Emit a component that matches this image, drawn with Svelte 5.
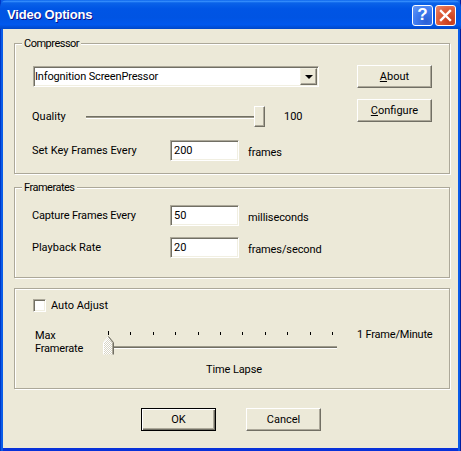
<script>
  const ticks = Array.from({ length: 11 }, (_, i) => i);
</script>

<div class="window">
  <header class="titlebar">
    <span class="title">Video Options</span>
    <div class="caption-buttons">
      <div class="cap help">?</div>
      <div class="cap close">
        <svg width="13" height="13" viewBox="0 0 13 13"><path d="M2 2 L11 11 M11 2 L2 11" stroke="#fff" stroke-width="2.4" stroke-linecap="square" fill="none"/></svg>
      </div>
    </div>
  </header>

  <main class="client">
    <section class="group g1">
      <span class="legend">Compressor</span>
      <div class="col-main">
        <div class="combo">
          <span class="combo-text">Infognition ScreenPressor</span>
          <span class="combo-btn"><svg width="8" height="4" viewBox="0 0 8 4"><path d="M0 0H8L4 4Z" fill="#000"/></svg></span>
        </div>
        <div class="quality">
          <span class="q-label">Quality</span>
          <div class="hslider">
            <div class="track"></div>
            <div class="thumb-rect"></div>
          </div>
          <span class="q-value">100</span>
        </div>
        <div class="row keyrow">
          <span class="lbl">Set Key Frames Every</span>
          <div class="input">200</div>
          <span class="unit">frames</span>
        </div>
      </div>
      <div class="col-side">
        <div class="btn"><span><u>A</u>bout</span></div>
        <div class="btn"><span><u>C</u>onfigure</span></div>
      </div>
    </section>

    <section class="group g2">
      <span class="legend">Framerates</span>
      <div class="row">
        <span class="lbl tight">Capture Frames Every</span>
        <div class="input">50</div>
        <span class="unit">milliseconds</span>
      </div>
      <div class="row second">
        <span class="lbl">Playback Rate</span>
        <div class="input">20</div>
        <span class="unit">frames/second</span>
      </div>
    </section>

    <section class="group g3">
      <label class="check">
        <span class="box"></span>
        <span>Auto Adjust</span>
      </label>
      <div class="rate">
        <span class="max">Max<br />Framerate</span>
        <div class="rate-mid">
          <div class="ticks">
            {#each ticks as t}
              <i class:first={t === 0}></i>
            {/each}
          </div>
          <div class="rate-track"></div>
          <svg class="thumb-penta" width="11" height="19" viewBox="0 0 11 19">
            <defs>
              <pattern id="dots" width="2" height="2" patternUnits="userSpaceOnUse">
                <rect width="2" height="2" fill="#fff"/>
                <rect width="1" height="1" fill="#d8d5c6"/>
                <rect x="1" y="1" width="1" height="1" fill="#d8d5c6"/>
              </pattern>
            </defs>
            <path d="M0.5 18.5V6.5L5.5 0.5L10.5 6.5V18.5Z" fill="url(#dots)"/>
            <path d="M0.5 18.5V6.5L5.5 0.5" fill="none" stroke="#fff"/>
            <path d="M5.5 0.5L9.5 6.5V18.5" fill="none" stroke="#aca899"/>
            <path d="M5.5 0.5L10.5 6.5V18.5" fill="none" stroke="#716f64"/>
          </svg>
        </div>
        <span class="minute">1 Frame/Minute</span>
      </div>
      <div class="lapse">Time Lapse</div>
    </section>

    <footer class="actions">
      <div class="btn default"><span>OK</span></div>
      <div class="btn"><span>Cancel</span></div>
    </footer>
  </main>
</div>

<style>
  :global(body) {
    margin: 0;
    background: #ece9d8;
  }
  .window {
    width: 461px;
    height: 451px;
    display: flex;
    flex-direction: column;
    font-family: Roboto, "Liberation Sans", Arial, sans-serif;
    font-size: 11px;
    color: #000;
    background:
      linear-gradient(90deg, #0038c8 0, #0038c8 1px, #0a5ce8 1px, #0a5ce8 460px, #001ea0 460px);
    overflow: hidden;
  }
  .titlebar {
    height: 29px;
    flex: none;
    display: flex;
    align-items: center;
    justify-content: space-between;
    padding: 0 5px 0 7px;
    box-sizing: border-box;
    background: linear-gradient(180deg, #0058e6 0, #3a93ff 4%, #0a62e8 10%, #0055e5 30%, #0054e3 60%, #0058ee 85%, #0047c8 100%);
    border-radius: 7px 7px 0 0;
  }
  .title {
    font-family: "Liberation Sans", Arial, sans-serif;
    font-size: 13px;
    letter-spacing: -0.2px;
    font-weight: bold;
    color: #fff;
    text-shadow: 1px 1px 0 #0f1089;
  }
  .caption-buttons {
    display: flex;
    gap: 2px;
    margin-top: 1px;
  }
  .cap {
    width: 21px;
    height: 21px;
    box-sizing: border-box;
    border: 1px solid #fff;
    border-radius: 3px;
    display: flex;
    align-items: center;
    justify-content: center;
  }
  .help {
    background: radial-gradient(circle at 70% 80%, #2a5fd6, #3f7cf0 55%, #6a9af5 100%);
    color: #fff;
    font-family: "Liberation Sans", Arial, sans-serif;
    font-size: 17px;
    font-weight: bold;
  }
  .close {
    background: radial-gradient(circle at 75% 80%, #c5391a, #e0603c 60%, #eb8a6e 100%);
  }
  .client {
    flex: 1;
    min-height: 0;
    margin: 0 3px;
    background: #ece9d8;
    padding: 14px 0 0 11px;
    display: flex;
    flex-direction: column;
    border-bottom: 3px solid #0831d9;
  }
  .group {
    position: relative;
    width: 436px;
    box-sizing: border-box;
    border: 1px solid #aca899;
    box-shadow: 1px 1px 0 #fff, inset 1px 1px 0 #fff;
  }
  .legend {
    position: absolute;
    top: -7px;
    left: 7px;
    padding: 0 2px;
    background: #ece9d8;
    line-height: 14px;
    letter-spacing: -0.5px;
  }
  .g1 {
    height: 131px;
    display: flex;
    padding: 22px 0 0 17px;
  }
  .col-main {
    width: 286px;
  }
  .combo {
    margin-left: 1px;
    height: 21px;
    box-sizing: border-box;
    background: #fff;
    border: 1px solid;
    border-color: #aca899 #fff #fff #aca899;
    box-shadow: inset 1px 1px 0 #716f64, inset -1px -1px 0 #f1efe2;
    display: flex;
    align-items: center;
    justify-content: space-between;
    padding: 1px 1px 1px 1px;
    width: 286px;
  }
  .combo-text {
    letter-spacing: -0.15px;
  }
  .combo-btn {
    width: 17px;
    height: 17px;
    box-sizing: border-box;
    background: #ece9d8;
    border: 1px solid;
    border-color: #f1efe2 #716f64 #716f64 #f1efe2;
    box-shadow: inset -1px -1px 0 #aca899;
    display: flex;
    align-items: center;
    justify-content: center;
  }
  .quality {
    display: flex;
    align-items: center;
    height: 21px;
    margin-top: 19px;
  }
  .q-label {
    width: 54px;
  }
  .hslider {
    position: relative;
    width: 179px;
    height: 21px;
  }
  .track {
    position: absolute;
    left: 0;
    right: 0;
    top: 10px;
    height: 1px;
    background: #9d9a8b;
    border-top: 1px solid #716f64;
    border-bottom: 1px solid #fff;
  }
  .thumb-rect {
    position: absolute;
    left: 168px;
    top: 0;
    width: 11px;
    height: 21px;
    box-sizing: border-box;
    background: #ece9d8;
    border: 1px solid;
    border-color: #fff #716f64 #716f64 #fff;
    box-shadow: inset -1px -1px 0 #aca899;
  }
  .q-value {
    margin-left: 19px;
  }
  .row {
    display: flex;
    align-items: center;
    height: 21px;
  }
  .keyrow {
    margin-top: 13px;
  }
  .lbl {
    width: 138px;
    flex: none;
    white-space: nowrap;
  }
  .lbl.tight {
    letter-spacing: -0.15px;
  }
  .input {
    width: 69px;
    height: 21px;
    flex: none;
    box-sizing: border-box;
    background: #fff;
    border: 1px solid;
    border-color: #aca899 #fff #fff #aca899;
    box-shadow: inset 1px 1px 0 #716f64, inset -1px -1px 0 #f1efe2;
    padding: 0 3px;
    display: flex;
    align-items: center;
  }
  .unit {
    margin-left: 9px;
    padding-top: 3px;
    white-space: nowrap;
    letter-spacing: -0.1px;
  }
  .col-side {
    margin-left: 39px;
    margin-top: -1px;
    display: flex;
    flex-direction: column;
    gap: 11px;
  }
  .btn {
    width: 75px;
    height: 23px;
    box-sizing: border-box;
    background: #ece9d8;
    border: 1px solid;
    border-color: #fff #716f64 #716f64 #fff;
    box-shadow: inset -1px -1px 0 #aca899;
    display: flex;
    align-items: center;
    justify-content: center;
  }
  .btn.default {
    border: 1px solid #000;
    box-shadow: inset 1px 1px 0 #fff, inset -1px -1px 0 #716f64, inset -2px -2px 0 #aca899;
  }
  .g2 {
    margin-top: 13px;
    height: 91px;
    padding: 17px 0 0 17px;
  }
  .second {
    margin-top: 11px;
  }
  .g3 {
    margin-top: 10px;
    height: 101px;
    padding: 10px 0 0 18px;
  }
  .check {
    display: flex;
    align-items: center;
    gap: 5px;
    height: 13px;
  }
  .box {
    width: 13px;
    height: 13px;
    box-sizing: border-box;
    background: #fff;
    border: 1px solid;
    border-color: #aca899 #fff #fff #aca899;
    box-shadow: inset 1px 1px 0 #716f64, inset -1px -1px 0 #f1efe2;
  }
  .rate {
    display: flex;
    margin-top: 13px;
    height: 40px;
  }
  .max {
    width: 68px;
    margin-left: 2px;
    line-height: 13px;
    padding-top: 4px;
    flex: none;
    letter-spacing: -0.2px;
  }
  .rate-mid {
    position: relative;
    width: 234px;
    height: 40px;
    flex: none;
  }
  .ticks {
    position: absolute;
    left: 5px;
    width: 225px;
    top: 6px;
    display: flex;
    justify-content: space-between;
    height: 4px;
    align-items: flex-end;
  }
  .ticks i {
    display: block;
    width: 1px;
    height: 3px;
    background: #000;
  }
  .ticks i.first {
    height: 4px;
  }
  .rate-track {
    position: absolute;
    left: 10px;
    right: 0;
    top: 21px;
    height: 1px;
    background: #716f64;
    border-top: 1px solid #9d9a8b;
    border-bottom: 1px solid #fff;
  }
  .thumb-penta {
    position: absolute;
    left: 0;
    top: 11px;
    display: block;
  }
  .minute {
    margin-left: 20px;
    white-space: nowrap;
    padding-top: 3px;
    letter-spacing: -0.2px;
  }
  .lapse {
    margin-top: -2px;
    width: 402px;
    text-align: center;
    letter-spacing: -0.1px;
  }
  .actions {
    display: flex;
    gap: 30px;
    margin-top: 19px;
    padding-left: 127px;
  }
</style>
